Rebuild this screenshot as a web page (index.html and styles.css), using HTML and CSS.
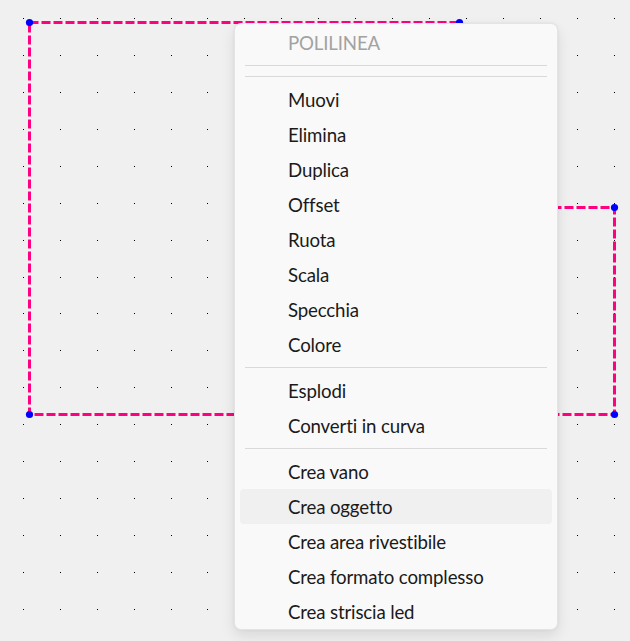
FILE: index.html
```html
<!DOCTYPE html>
<html lang="it">
<head>
<meta charset="utf-8">
<title>Polilinea</title>
<link rel="stylesheet" href="styles.css">
</head>
<body>
<div class="stage">
  <svg class="canvas" width="630" height="641" viewBox="0 0 630 641" xmlns="http://www.w3.org/2000/svg">
    <g class="dots">
      <line x1="23" x2="630" y1="18.5" y2="18.5"/>
      <line x1="23" x2="630" y1="55.5" y2="55.5"/>
      <line x1="23" x2="630" y1="92.5" y2="92.5"/>
      <line x1="23" x2="630" y1="129.5" y2="129.5"/>
      <line x1="23" x2="630" y1="166.5" y2="166.5"/>
      <line x1="23" x2="630" y1="203.5" y2="203.5"/>
      <line x1="23" x2="630" y1="240.5" y2="240.5"/>
      <line x1="23" x2="630" y1="277.5" y2="277.5"/>
      <line x1="23" x2="630" y1="313.5" y2="313.5"/>
      <line x1="23" x2="630" y1="350.5" y2="350.5"/>
      <line x1="23" x2="630" y1="387.5" y2="387.5"/>
      <line x1="23" x2="630" y1="424.5" y2="424.5"/>
      <line x1="23" x2="630" y1="461.5" y2="461.5"/>
      <line x1="23" x2="630" y1="498.5" y2="498.5"/>
      <line x1="23" x2="630" y1="535.5" y2="535.5"/>
      <line x1="23" x2="630" y1="572.5" y2="572.5"/>
      <line x1="23" x2="630" y1="609.5" y2="609.5"/>
    </g>
    <path class="poly" d="M29.5 22.5 H459.5 V207.5 H614.5 V414.5 H29.5 Z"/>
    <g class="vertex">
      <circle cx="29.5" cy="22.5" r="3.6"/>
      <circle cx="459.5" cy="22.5" r="3.6"/>
      <circle cx="459.5" cy="207.5" r="3.6"/>
      <circle cx="614.5" cy="207.5" r="3.6"/>
      <circle cx="614.5" cy="414.5" r="3.6"/>
      <circle cx="29.5" cy="414.5" r="3.6"/>
    </g>
  </svg>

  <div class="menu">
    <div class="menu-header">POLILINEA</div>
    <div class="sep"></div>
    <div class="sep"></div>
    <div class="item">Muovi</div>
    <div class="item">Elimina</div>
    <div class="item">Duplica</div>
    <div class="item">Offset</div>
    <div class="item">Ruota</div>
    <div class="item">Scala</div>
    <div class="item">Specchia</div>
    <div class="item">Colore</div>
    <div class="sep"></div>
    <div class="item">Esplodi</div>
    <div class="item">Converti in curva</div>
    <div class="sep"></div>
    <div class="item">Crea vano</div>
    <div class="item item-hover">Crea oggetto</div>
    <div class="item">Crea area rivestibile</div>
    <div class="item">Crea formato complesso</div>
    <div class="item">Crea striscia led</div>
  </div>
</div>
</body>
</html>
```

FILE: styles.css
```css
html, body {
  margin: 0;
  padding: 0;
}

body {
  background: #f0f0f0;
  overflow: hidden;
}

.stage {
  position: relative;
  width: 630px;
  height: 641px;
}

.canvas {
  display: block;
}

.dots line {
  stroke: #000;
  stroke-width: 1;
  stroke-dasharray: 1 36 1 36 1 36 1 36 1 35 1 36 1 36 1 36 1 36 1 36 1 36 1 36 1 36 1 36 1 36 1 36 1 200;
}

.poly {
  fill: none;
  stroke: #ff0080;
  stroke-width: 3;
  stroke-dasharray: 9 3;
}

.vertex circle {
  fill: #0000ff;
}

.menu {
  position: absolute;
  left: 234px;
  top: 23px;
  width: 322px;
  height: 605px;
  display: flex;
  flex-direction: column;
  background: #f9f9f9;
  border: 1px solid #e4e4e4;
  border-radius: 7px;
  box-shadow: 0 6px 14px rgba(0, 0, 0, 0.1), 0 0 3px rgba(0, 0, 0, 0.06);
  font-family: Lato, "Noto Sans", sans-serif;
  font-size: 18.67px;
  letter-spacing: -0.15px;
  overflow: hidden;
}

.menu-header {
  flex: none;
  height: 36px;
  box-sizing: border-box;
  padding-top: 2px;
  line-height: 34px;
  padding-left: 53px;
  color: #a2a2a2;
  white-space: nowrap;
}

.sep {
  flex: none;
  height: 1px;
  margin: 5px 10px;
  background: #d9d9d9;
}

.item {
  flex: none;
  height: 35px;
  box-sizing: border-box;
  padding-top: 2px;
  line-height: 33px;
  margin: 0 5px;
  padding-left: 48px;
  color: #1a1a1a;
  border-radius: 4px;
  white-space: nowrap;
}

.item-hover {
  background: #f0f0f0;
}
```
